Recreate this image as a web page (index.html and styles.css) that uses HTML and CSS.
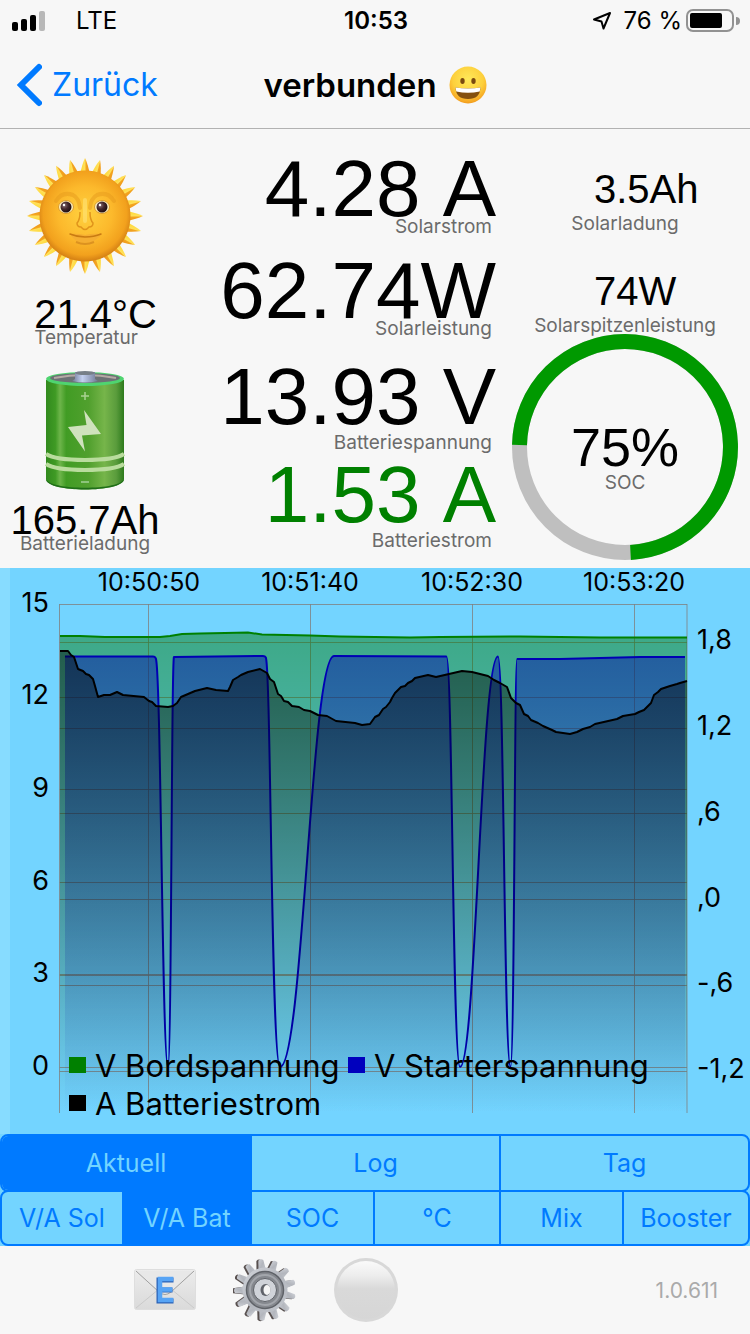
FILE: index.html
```html
<!DOCTYPE html>
<html lang="de">
<head>
<meta charset="utf-8">
<meta name="viewport" content="width=device-width, initial-scale=1">
<title>Solar Monitor</title>
<link rel="stylesheet" href="styles.css">
</head>
<body>
<div class="app">
  <header class="top">
    <div class="status">
      <div class="status-side">
        <svg class="signal" viewBox="0 0 34 20" aria-hidden="true">
          <rect x="0" y="11" width="6" height="9" rx="2"/>
          <rect x="9" y="8" width="6" height="12" rx="2"/>
          <rect x="18" y="4" width="6" height="16" rx="2"/>
          <rect x="27" y="0" width="6" height="20" rx="2" fill="#b8b8b8"/>
        </svg>
        <span class="carrier">LTE</span>
      </div>
      <span class="clock">10:53</span>
      <div class="status-side status-right">
        <svg class="location" viewBox="0 0 20 20" aria-hidden="true"><path d="M18 2 11.500 17.500 9.500 10.500 2 8.500Z" fill="none" stroke="#000" stroke-width="2" stroke-linejoin="round"/></svg>
        <span>76 %</span>
        <svg class="cell" viewBox="0 0 54 24" aria-hidden="true">
          <rect x="1" y="1" width="46" height="21" rx="6" fill="none" stroke="#929292" stroke-width="2"/>
          <rect x="4" y="4" width="32" height="15" rx="2"/>
          <path d="M50 8a4 4 0 0 1 0 8z" fill="#929292"/>
        </svg>
      </div>
    </div>
    <nav class="nav">
      <button class="back" type="button">
        <svg class="chevron" viewBox="0 0 26 44" aria-hidden="true"><path d="M23 4 5 22 23 40" fill="none" stroke="#007aff" stroke-width="6" stroke-linecap="round" stroke-linejoin="miter"/></svg>
        <span>Zurück</span>
      </button>
      <h1 class="title">verbunden
        <svg class="smile" viewBox="0 0 38 38" aria-hidden="true">
          <defs>
            <radialGradient id="face" cx=".5" cy=".35" r=".68"><stop offset="0" stop-color="#ffe95a"/><stop offset=".6" stop-color="#fdd03c"/><stop offset=".9" stop-color="#f6a623"/><stop offset="1" stop-color="#e88d12"/></radialGradient>
          </defs>
          <circle cx="19" cy="19" r="18.500" fill="url(#face)"/>
          <ellipse cx="13.500" cy="15" rx="2.200" ry="3" fill="#7a4a10"/>
          <ellipse cx="24.500" cy="15" rx="2.200" ry="3" fill="#7a4a10"/>
          <path d="M6.500 21.500Q19 23.500 31.500 21.500Q31 33 19 33T6.500 21.500Z" fill="#84500f"/>
          <path d="M6.500 21.500Q19 23.500 31.500 21.500L30.700 25.500Q19 28 7.300 25.500Z" fill="#fff"/>
        </svg>
      </h1>
    </nav>
  </header>

  <main class="main">
    <section class="metrics">
      <div class="col-left">
        <svg class="sun" viewBox="0 0 116 116" aria-hidden="true">
          <defs>
            <linearGradient id="ray" x1="0" x2="1" y1="0" y2="0"><stop offset="0" stop-color="#ffd72e"/><stop offset=".5" stop-color="#ffe05a"/><stop offset=".6" stop-color="#f3a51f"/><stop offset="1" stop-color="#ee951a"/></linearGradient>
            <radialGradient id="disc" cx=".5" cy=".47" r=".54"><stop offset="0" stop-color="#ffd13f"/><stop offset=".55" stop-color="#fcb92c"/><stop offset=".85" stop-color="#f2a11d"/><stop offset="1" stop-color="#cf7a12"/></radialGradient>
            <radialGradient id="eye" cx=".35" cy=".35" r=".7"><stop offset="0" stop-color="#8b7076"/><stop offset=".5" stop-color="#43282c"/><stop offset="1" stop-color="#1c0c10"/></radialGradient>
            <path id="spike" d="M53 17Q55 6 58 0Q61 6 63 17Z" fill="url(#ray)"/>
            <g id="spikes">
              <use href="#spike"/><use href="#spike" transform="rotate(15 58 58)"/><use href="#spike" transform="rotate(30 58 58)"/><use href="#spike" transform="rotate(45 58 58)"/><use href="#spike" transform="rotate(60 58 58)"/><use href="#spike" transform="rotate(75 58 58)"/>
            </g>
          </defs>
          <use href="#spikes"/><use href="#spikes" transform="rotate(90 58 58)"/><use href="#spikes" transform="rotate(180 58 58)"/><use href="#spikes" transform="rotate(270 58 58)"/>
          <circle cx="58" cy="58" r="45.500" fill="url(#disc)"/>
          <path d="M29 43Q35 33 46 37Q52 40 53 50M87 43Q81 33 70 37Q64 40 63 50" fill="none" stroke="#e59a1c" stroke-width="4" opacity=".5" stroke-linecap="round"/>
          <path d="M58 42V63" stroke="#ffe377" stroke-width="4" opacity=".6" stroke-linecap="round"/>
          <path d="M53 54Q53 62 50 65Q50 69 54 69Q58 74 62 69Q66 69 66 65Q63 62 63 54" fill="none" stroke="#d88714" stroke-width="1.500" opacity=".8"/>
          <ellipse cx="39" cy="49" rx="7.500" ry="6.500" fill="#fff2c4" stroke="#d99a2c"/>
          <ellipse cx="75" cy="49" rx="7.500" ry="6.500" fill="#fff2c4" stroke="#d99a2c"/>
          <circle cx="39" cy="49" r="5.500" fill="url(#eye)"/>
          <circle cx="75" cy="49" r="5.500" fill="url(#eye)"/>
          <circle cx="37" cy="47" r="1.200" fill="#fff"/><circle cx="73" cy="47" r="1.200" fill="#fff"/>
          <path d="M43 76Q50 75 58 77Q66 75 75 76Q68 85 58 85T43 76Z" fill="#f5ae32"/>
          <path d="M43 76Q50 79 58 79Q67 79 74 76" fill="none" stroke="#c97b12" stroke-width="1.500" stroke-linecap="round"/>
          <path d="M49 84Q58 88 67 84" fill="none" stroke="#dc9220" stroke-width="2"/>
        </svg>
        <div class="field field-temp">
          <span class="value">21.4°C</span>
          <span class="label">Temperatur</span>
        </div>
        <svg class="battery" viewBox="0 0 80 120" aria-hidden="true">
          <defs>
            <linearGradient id="can" x1="0" x2="1" y1="0" y2="0"><stop offset="0" stop-color="#328a1e"/><stop offset=".12" stop-color="#3f9a24"/><stop offset=".18" stop-color="#6db54a"/><stop offset=".26" stop-color="#419c24"/><stop offset=".55" stop-color="#51a02e"/><stop offset=".75" stop-color="#76b54a"/><stop offset=".9" stop-color="#5a9c3c"/><stop offset="1" stop-color="#2d7a1c"/></linearGradient>
            <linearGradient id="cap" x1="0" x2="1" y1="0" y2="0"><stop offset="0" stop-color="#6f7894"/><stop offset=".4" stop-color="#c3d0f0"/><stop offset="1" stop-color="#6f7894"/></linearGradient>
          </defs>
          <path d="M1 9V108C1 122 79 122 79 108V9Z" fill="url(#can)"/>
          <path d="M1 107C1 120 79 120 79 107V108C79 122 1 122 1 108Z" fill="#1f6e18"/>
          <ellipse cx="40" cy="8" rx="39" ry="7" fill="#4fd470"/>
          <ellipse cx="40" cy="7" rx="35" ry="5" fill="#6c7275"/>
          <path d="M9 7Q40 1 71 7" fill="none" stroke="#b5a9a4" stroke-width="2"/>
          <path d="M30 1V8L27 10Q40 13 53 10L50 8V1Z" fill="url(#cap)"/>
          <ellipse cx="40" cy="2" rx="10" ry="2" fill="#777f88"/>
          <path d="M40 21V29M36 25H44" stroke="#a9d292" stroke-width="1.500"/>
          <path d="M39 39 56 63 37 64.500 40 80.500 23 56 41.500 54Z" fill="#cfe2bd"/>
          <path d="M1 83Q10 89 40 89T79 83M1 93Q10 99 40 99T79 93" fill="none" stroke="#b9dc9d" stroke-width="4"/>
          <path d="M36 111H44" stroke="#8cc47a" stroke-width="2"/>
        </svg>
        <div class="field">
          <span class="value">165.7Ah</span>
          <span class="label">Batterieladung</span>
        </div>
      </div>

      <div class="col-mid">
        <div class="group group-solar">
          <div class="reading"><span class="big">4.28 A</span><span class="label">Solarstrom</span></div>
          <div class="reading"><span class="big">62.74W</span><span class="label">Solarleistung</span></div>
        </div>
        <div class="group group-battery">
          <div class="reading"><span class="big">13.93 V</span><span class="label">Batteriespannung</span></div>
          <div class="reading"><span class="big big-green">1.53 A</span><span class="label">Batteriestrom</span></div>
        </div>
      </div>

      <div class="col-right">
        <div class="peak"><span class="value">3.5Ah</span><span class="label">Solarladung</span></div>
        <div class="peak"><span class="value">74W</span><span class="label">Solarspitzenleistung</span></div>
        <div class="gauge">
          <svg class="ring" viewBox="0 0 226 226" aria-hidden="true">
            <circle cx="113" cy="113" r="105.500" fill="none" stroke="#bfbfbf" stroke-width="15"/>
            <path d="M7.500 111A105.500 105.500 0 1 1 118.500 218.400" fill="none" stroke="#009900" stroke-width="15"/>
          </svg>
          <div class="gauge-text"><span class="percent">75%</span><span class="label">SOC</span></div>
        </div>
      </div>
    </section>

    <section class="chart-area">
      <svg class="chart" viewBox="0 0 750 566" role="img" aria-label="Spannung und Batteriestrom">
        <defs>
          <linearGradient id="fg" gradientUnits="userSpaceOnUse" x1="0" x2="0" y1="65" y2="545"><stop offset="0" stop-color="#007800" stop-opacity=".47"/><stop offset="1" stop-color="#007800" stop-opacity="0"/></linearGradient>
          <linearGradient id="fb" gradientUnits="userSpaceOnUse" x1="0" x2="0" y1="65" y2="545"><stop offset="0" stop-color="#0000b4" stop-opacity=".47"/><stop offset="1" stop-color="#0000b4" stop-opacity="0"/></linearGradient>
          <linearGradient id="fk" gradientUnits="userSpaceOnUse" x1="0" x2="0" y1="65" y2="545"><stop offset="0" stop-opacity=".47"/><stop offset="1" stop-opacity="0"/></linearGradient>
        </defs>
        <rect width="10" height="566" fill="#87dcff"/>
        <g class="grid">
          <path d="M59.500 36.500H687M59.500 74.500H687M59.500 129.500H687M59.500 160.500H687M59.500 221.500H687M59.500 245.500H687M59.500 314.500H687M59.500 331.500H687M59.500 417.500H687M59.500 499.500H687M59.500 503.500H687"/>
          <path d="M59.500 407H687" stroke-width="2"/>
          <path d="M59.500 36V545M148.500 36V545M310.500 36V545M472.500 36V545M634.500 36V545M687 36V545"/>
        </g>
        <path fill="url(#fg)" d="M60 68 80 68 105 69 160 69 170 68 182 66 200 65.500 225 65 248 64.500 262 66.500 310 67.500 340 68.500 375 69 410 69.500 440 69 520 68.500 600 69.500 687 69.500V545H60Z"/>
        <path fill="none" stroke="#008000" stroke-width="2" d="M60 68 80 68 105 69 160 69 170 68 182 66 200 65.500 225 65 248 64.500 262 66.500 310 67.500 340 68.500 375 69 410 69.500 440 69 520 68.500 600 69.500 687 69.500"/>
        <path fill="url(#fb)" d="M65 88.500H153Q155 88.500 155.500 90C161 88.500 162 499 168 499C171.500 499 171.500 88.500 174 89L263 88Q265 88 265.500 89C271 88 271 499 280 499C303 499 311 88 334 88L446.500 88.500C452.500 88.500 452.500 499 460 499C476 499 481 88.500 498 88.500C504 88.500 504 499 510.500 499C514.500 499 514.500 91 517 91L560 91 640 89 685 89V545H65Z"/>
        <path fill="none" stroke="#0000b4" stroke-width="2" stroke-linejoin="round" d="M65 88.500H153Q155 88.500 155.500 90C161 88.500 162 499 168 499C171.500 499 171.500 88.500 174 89L263 88Q265 88 265.500 89C271 88 271 499 280 499C303 499 311 88 334 88L446.500 88.500C452.500 88.500 452.500 499 460 499C476 499 481 88.500 498 88.500C504 88.500 504 499 510.500 499C514.500 499 514.500 91 517 91L560 91 640 89 685 89"/>
        <path fill="url(#fk)" d="M60 83H68L71 87 74 89 78 101 83 103 86 106 89 107 93 111 95 118 98 129 104 127 110 127 117 124 123 127 144 129 149 133 152 134 156 138 168 139 173 138 177 135 181 129 188 126 195 123 207 120 216 122 228 123 230 119 233 112 238 109 241 107 248 104 260 101 267 105 270 111 274 114 278 126 281 128 284 133 288 134 292 138 299 139 304 142 310 143 318 147 327 148 336 153 355 155 362 157 370 156 375 149 379 147 383 141 386 139 390 134 392 130 395 125 398 122 401 119 405 118 408 115 412 113 415 110 428 107 436 109 449 106 462 103 472 104 488 108 494 112 500 115 507 119 511 130 516 135 520 137 524 146 528 148 531 152 538 155 543 158 552 162 556 164 570 166 577 164 583 161 590 159 595 156 617 151 623 148 635 146 639 144 644 142 651 135 654 127 658 124 661 121 670 118 677 116 680 115 687 113V545H60Z"/>
        <path fill="none" stroke="#000" stroke-width="2" stroke-linejoin="round" d="M60 83H68L71 87 74 89 78 101 83 103 86 106 89 107 93 111 95 118 98 129 104 127 110 127 117 124 123 127 144 129 149 133 152 134 156 138 168 139 173 138 177 135 181 129 188 126 195 123 207 120 216 122 228 123 230 119 233 112 238 109 241 107 248 104 260 101 267 105 270 111 274 114 278 126 281 128 284 133 288 134 292 138 299 139 304 142 310 143 318 147 327 148 336 153 355 155 362 157 370 156 375 149 379 147 383 141 386 139 390 134 392 130 395 125 398 122 401 119 405 118 408 115 412 113 415 110 428 107 436 109 449 106 462 103 472 104 488 108 494 112 500 115 507 119 511 130 516 135 520 137 524 146 528 148 531 152 538 155 543 158 552 162 556 164 570 166 577 164 583 161 590 159 595 156 617 151 623 148 635 146 639 144 644 142 651 135 654 127 658 124 661 121 670 118 677 116 680 115 687 113"/>
        <g class="axis axis-x">
          <text x="149" y="23">10:50:50</text><text x="310" y="23">10:51:40</text><text x="472" y="23">10:52:30</text><text x="634" y="23">10:53:20</text>
        </g>
        <g class="axis axis-l">
          <text x="49" y="44">15</text><text x="49" y="136">12</text><text x="49" y="229">9</text><text x="49" y="322">6</text><text x="49" y="414">3</text><text x="49" y="507">0</text>
        </g>
        <g class="axis axis-r">
          <text x="697" y="81">1,8</text><text x="697" y="167">1,2</text><text x="697" y="253">,6</text><text x="697" y="339">,0</text><text x="697" y="424">-,6</text><text x="697" y="510">-1,2</text>
        </g>
        <g class="legend">
          <rect x="69" y="489" width="17" height="16" fill="#008000"/><text x="95" y="509">V Bordspannung</text>
          <rect x="348" y="489" width="17" height="16" fill="#0000be"/><text x="374" y="509">V Starterspannung</text>
          <rect x="69" y="527" width="17" height="16"/><text x="95" y="547">A Batteriestrom</text>
        </g>
      </svg>
      <div class="segments segments-range">
        <button type="button" class="active">Aktuell</button><button type="button">Log</button><button type="button">Tag</button>
      </div>
      <div class="segments segments-series">
        <button type="button">V/A Sol</button><button type="button" class="active">V/A Bat</button><button type="button">SOC</button><button type="button">°C</button><button type="button">Mix</button><button type="button">Booster</button>
      </div>
    </section>
  </main>

  <footer class="toolbar">
    <button type="button" aria-label="E-Mail">
      <svg class="mail" viewBox="0 0 62 42" aria-hidden="true">
        <defs><linearGradient id="paper" x1="0" x2="0" y1="0" y2="1"><stop offset="0" stop-color="#ececec"/><stop offset="1" stop-color="#dadada"/></linearGradient></defs>
        <rect x=".5" y=".5" width="61" height="40" rx="2" fill="url(#paper)" stroke="#dedede"/>
        <path d="M2 39 25 20M60 39 37 20" stroke="#cacaca"/>
        <path d="M2 2 25 23Q31 28 37 23L60 2" fill="#e8e8e8" stroke="#a0a0a0"/>
        <path d="M25 11H37M25 21H36M25 32H37M25 11V32" fill="none" stroke="#2b62b5" stroke-width="5" stroke-linecap="square"/>
        <path d="M26 10H37M26 20.500H36M26 31H37M26 10V31" fill="none" stroke="#57a4f5" stroke-width="4.500" stroke-linecap="square"/>
      </svg>
    </button>
    <button type="button" aria-label="Einstellungen">
      <svg class="gear" viewBox="0 0 64 64" aria-hidden="true">
        <defs>
          <linearGradient id="metal" x1="0" x2="1" y1="0" y2="1"><stop offset="0" stop-color="#d3d6dc"/><stop offset=".5" stop-color="#b3b6bd"/><stop offset="1" stop-color="#c4c8cf"/></linearGradient>
          <path id="tooth" d="M28 14 29.500 2Q32 0 34.500 2L36 14Z"/>
          <g id="teeth"><use href="#tooth"/><use href="#tooth" transform="rotate(27.700 32 32)"/><use href="#tooth" transform="rotate(55.400 32 32)"/><use href="#tooth" transform="rotate(83.100 32 32)"/><use href="#tooth" transform="rotate(110.800 32 32)"/><use href="#tooth" transform="rotate(138.500 32 32)"/><use href="#tooth" transform="rotate(166.200 32 32)"/><use href="#tooth" transform="rotate(193.800 32 32)"/><use href="#tooth" transform="rotate(221.500 32 32)"/><use href="#tooth" transform="rotate(249.200 32 32)"/><use href="#tooth" transform="rotate(276.900 32 32)"/><use href="#tooth" transform="rotate(304.600 32 32)"/><use href="#tooth" transform="rotate(332.300 32 32)"/></g>
        </defs>
        <g transform="rotate(-8 32 32)">
          <use href="#teeth" fill="#58504f" x="-2" y="0"/>
          <use href="#teeth" fill="url(#metal)"/>
        </g>
        <circle cx="32" cy="32" r="22.500" fill="url(#metal)"/>
        <circle cx="32" cy="32" r="18.500" fill="#85888e" stroke="#5f6268" stroke-width="1.500"/>
        <circle cx="32" cy="32" r="15" fill="none" stroke="#a3a6ac" stroke-width="2"/>
        <circle cx="32" cy="32" r="11.500" fill="#d0d3d9" stroke="#606369"/>
        <ellipse cx="32.500" cy="32" rx="5" ry="6" fill="#60636a"/>
        <ellipse cx="34" cy="32" rx="3.500" ry="5" fill="#f5f5f5"/>
      </svg>
    </button>
    <button type="button" aria-label="Status">
      <svg class="ball" viewBox="0 0 64 64" aria-hidden="true">
        <defs><linearGradient id="gloss" x1="0" x2="0" y1="0" y2="1"><stop offset="0" stop-color="#fafafa"/><stop offset=".25" stop-color="#ededed"/><stop offset=".48" stop-color="#d9d9d9"/><stop offset="1" stop-color="#d6d6d6"/></linearGradient></defs>
        <circle cx="32" cy="32" r="32" fill="#d8d8d8"/>
        <circle cx="32" cy="32" r="29" fill="url(#gloss)"/>
      </svg>
    </button>
    <span class="version">1.0.611</span>
  </footer>
</div>
</body>
</html>
```

FILE: styles.css
```css
* { box-sizing: border-box; }

body {
  margin: 0;
  background: #f7f7f7;
  color: #000;
  font-family: Inter, "Noto Sans", sans-serif;
}

button {
  margin: 0;
  padding: 0;
  border: 0;
  background: none;
  color: #007aff;
  font: inherit;
}

svg { display: block; flex: none; }

.app {
  display: flex;
  flex-direction: column;
  min-height: 100vh;
}

/* Header */
.top { border-bottom: 1px solid #b2b2b2; }

.status {
  display: grid;
  grid-template-columns: 1fr auto 1fr;
  align-items: center;
  height: 41px;
  padding: 0 10px 0 12px;
  font-size: 24px;
}

.status-side { display: flex; align-items: center; }
.status-right { justify-content: flex-end; gap: 4px; }
.signal { width: 34px; height: 20px; }
.carrier { margin-left: 30px; }
.clock { font-weight: 600; }
.location { width: 20px; height: 20px; margin-right: 8px; }
.cell { width: 54px; height: 24px; }

.nav {
  display: grid;
  grid-template-columns: 1fr auto 1fr;
  align-items: center;
  height: 87px;
  padding: 0 16px;
}

.back {
  display: flex;
  align-items: center;
  justify-self: start;
  gap: 10px;
  font-size: 32px;
}

.chevron { width: 26px; height: 44px; }

.title {
  display: flex;
  align-items: center;
  gap: 12px;
  margin: 0;
  font-size: 33px;
  font-weight: 600;
}

.smile { width: 38px; height: 38px; }

/* Readings */
.metrics {
  display: grid;
  grid-template-columns: 17fr 33fr 25fr;
  padding-bottom: 8px;
}

.value, .big, .percent {
  font-family: "Liberation Sans", Arial, sans-serif;
  white-space: nowrap;
}

.value { font-size: 40px; line-height: 32px; }
.big { font-size: 80px; line-height: 60px; font-kerning: none; }
.big-green { color: #008000; }
.percent { font-size: 54px; line-height: 48px; }

.label {
  color: #6b6b6b;
  font-size: 19px;
  line-height: 16px;
}

.col-left {
  display: flex;
  flex-direction: column;
  align-items: center;
  padding-top: 29px;
}

.sun { width: 116px; height: 116px; }
.field { display: flex; flex-direction: column; align-items: center; }
.field-temp { align-self: flex-end; align-items: flex-start; margin: 24px 13px 25px 0; }
.battery { width: 80px; height: 120px; margin-bottom: 13px; }

.col-mid {
  display: flex;
  flex-direction: column;
  gap: 30px;
  padding: 30px 4px 0 0;
}

.group { display: flex; flex-direction: column; }
.group-solar { gap: 26px; }
.group-battery { gap: 14px; }
.reading { display: flex; flex-direction: column; align-items: flex-end; }
.reading .label { margin-right: 4px; }
.group-battery .label { margin-top: 8px; }

.col-right {
  display: flex;
  flex-direction: column;
  align-items: center;
  padding-top: 44px;
}

.peak {
  display: flex;
  flex-direction: column;
  gap: 11px;
  align-self: stretch;
  margin-bottom: 43px;
}

.peak .value { padding-left: 94px; }
.peak .label { text-align: center; }
.peak:nth-child(2) { margin-bottom: 0; }

.gauge { display: grid; place-items: center; }
.gauge > * { grid-area: 1 / 1; }
.ring { width: 226px; height: 226px; }

.gauge-text {
  display: flex;
  flex-direction: column;
  align-items: center;
  gap: 4px;
  padding-top: 20px;
}

/* Chart */
.chart-area { background: #73d4ff; }
.chart { width: 100%; height: auto; }
.grid { fill: none; stroke: #808080; stroke-opacity: .8; }
.axis-x { font-size: 25px; text-anchor: middle; }
.axis-l { font-size: 27px; text-anchor: end; }
.axis-r { font-size: 27px; }
.legend { font-size: 31px; }

.segments {
  display: grid;
  overflow: hidden;
  border: 2px solid #007aff;
  border-radius: 8px;
}

.segments-range { grid-template-columns: 248fr 249fr 249fr; height: 58px; }

.segments-series {
  grid-template-columns: 120fr 128fr 123fr 126fr 123fr 126fr;
  height: 56px;
  margin-top: -2px;
}

.segments button { font-size: 25px; white-space: nowrap; }
.segments button + button { border-left: 2px solid #007aff; }
.segments .active { background: #007aff; color: #73d4ff; }

/* Toolbar */
.toolbar {
  display: flex;
  flex: 1;
  align-items: center;
  gap: 37px;
  min-height: 88px;
  padding: 0 32px 0 134px;
}

.mail { width: 62px; height: 42px; }
.gear { width: 64px; height: 64px; }
.ball { width: 64px; height: 64px; }
.version { margin-left: auto; color: #aaa; font-size: 21px; }
```
